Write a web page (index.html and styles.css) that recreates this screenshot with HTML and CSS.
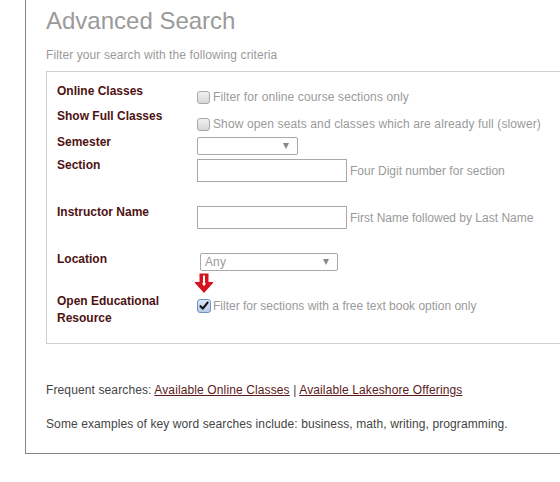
FILE: index.html
```html
<!DOCTYPE html>
<html>
<head>
<meta charset="utf-8">
<link rel="stylesheet" href="styles.css">
</head>
<body>
<div class="panel">
  <h1 class="title">Advanced Search</h1>
  <p class="subtitle">Filter your search with the following criteria</p>
  <div class="criteria">
    <div class="row r1">
      <div class="label">Online Classes</div>
      <div class="control c1">
        <span class="cb"></span><span class="cbtext">Filter for online course sections only</span>
      </div>
    </div>
    <div class="row r2">
      <div class="label">Show Full Classes</div>
      <div class="control c2">
        <span class="cb"></span><span class="cbtext">Show open seats and classes which are already full (slower)</span>
      </div>
    </div>
    <div class="row r3">
      <div class="label">Semester</div>
      <div class="control c3">
        <div class="select sem"><span class="val"></span><span class="caret"></span></div>
      </div>
    </div>
    <div class="row r4">
      <div class="label">Section</div>
      <div class="control c4">
        <div class="input"></div><span class="hint">Four Digit number for section</span>
      </div>
    </div>
    <div class="row r5">
      <div class="label">Instructor Name</div>
      <div class="control c5">
        <div class="input"></div><span class="hint">First Name followed by Last Name</span>
      </div>
    </div>
    <div class="row r6">
      <div class="label">Location</div>
      <div class="control c6">
        <div class="select loc"><span class="val">Any</span><span class="caret"></span></div>
      </div>
    </div>
    <div class="row r7">
      <div class="label two">Open Educational<br>Resource</div>
      <div class="control c7">
        <svg class="pointer" width="20" height="20" viewBox="0 0 20 20">
          <path d="M5.5 0.5 H14.5 V9 H19 Q19.5 9.5 19 10 L10.5 19.5 Q10 20 9.5 19.5 L1 10 Q0.5 9.5 1 9 H5.5 Z" fill="#d5121d"/>
          <path d="M10 2.5 V11" stroke="#fff" stroke-width="2"/>
          <path d="M7.8 10.2 L10 13.2 L12.2 10.2 Z" fill="#fff"/>
        </svg>
        <span class="cb checked">
          <svg width="12" height="12" viewBox="0 0 12 12"><path d="M2.5 6.2 L4.8 8.6 L9.6 2.6" fill="none" stroke="#111" stroke-width="2.1" stroke-linecap="round" stroke-linejoin="round"/></svg>
        </span><span class="cbtext plain">Filter for sections with a free text book option only</span>
      </div>
    </div>
  </div>
  <p class="frequent">Frequent searches: <a href="#">Available Online Classes</a> | <a href="#">Available Lakeshore Offerings</a></p>
  <p class="examples">Some examples of key word searches include: business, math, writing, programming.</p>
</div>
</body>
</html>
```
FILE: styles.css
```css
html, body {
  margin: 0;
  padding: 0;
  background: #fff;
  overflow: hidden;
}
body {
  font-family: "Liberation Sans", Arial, sans-serif;
  font-size: 12px;
  line-height: 15px;
}
.panel {
  box-sizing: border-box;
  margin-left: 25px;
  width: 620px;
  height: 454px;
  border-left: 1px solid #858585;
  border-bottom: 1px solid #858585;
  padding: 7px 0 0 20px;
}
.title {
  margin: 0;
  font-size: 24px;
  line-height: 28px;
  font-weight: normal;
  color: #9a9a9a;
}
.subtitle {
  margin: 13px 0 0;
  color: #9a9a9a;
  letter-spacing: 0.1px;
}
.criteria {
  margin-top: 8px;
  width: 560px;
  border: 1px solid #cfcfcf;
  padding: 12px 0 16px 10px;
}
.row {
  display: flex;
  align-items: flex-start;
}
.r1 { height: 25px; }
.r2 { height: 26px; }
.r3 { height: 23px; }
.r4 { height: 47px; }
.r5 { height: 47px; }
.r6 { height: 41px; }
.r7 { height: 34px; }
.label {
  width: 140px;
  flex: none;
  font-weight: bold;
  color: #4e1212;
}
.label.two {
  line-height: 17px;
}
.control {
  display: flex;
  align-items: center;
  color: #9a9a9a;
  position: relative;
  letter-spacing: 0.12px;
}
.c1 { margin-top: 5px; }
.c2 { margin-top: 7px; }
.c3 { margin-top: 2px; }
.c4 { margin-top: 1px; }
.c5 { margin-top: 1px; }
.c6 { margin-top: 1px; }
.c7 { margin-top: 5px; }
.cb {
  box-sizing: border-box;
  width: 13px;
  height: 13px;
  border: 1px solid #a8a8a8;
  border-radius: 3px;
  background: linear-gradient(#f2f2f2, #d6d6d6);
  flex: none;
  display: flex;
  align-items: center;
  justify-content: center;
}
.cb.checked {
  width: 14px;
  height: 14px;
  border-color: #7593c2;
  background: linear-gradient(#d8e4f4, #b9cbe6);
}
.cbtext {
  margin-left: 3px;
  margin-top: 1px;
}
.cbtext.plain {
  margin-left: 2px;
  letter-spacing: 0;
}
.select {
  box-sizing: border-box;
  height: 18px;
  border: 1px solid #a9a9a9;
  border-radius: 2px;
  display: flex;
  align-items: center;
  justify-content: space-between;
  padding: 0 8px 0 4px;
  background: #fff;
}
.select.sem { width: 101px; }
.select.loc { width: 138px; margin-left: 3px; }
.val { color: #9a9a9a; }
.caret {
  width: 0;
  height: 0;
  border-left: 3.5px solid transparent;
  border-right: 3.5px solid transparent;
  border-top: 6px solid #888;
}
.input {
  box-sizing: border-box;
  width: 150px;
  height: 23px;
  border: 1px solid #a9a9a9;
  background: #fff;
}
.hint {
  margin-left: 3px;
  margin-top: 2px;
  letter-spacing: 0;
}
.pointer {
  position: absolute;
  left: -3px;
  top: -25px;
}
.frequent {
  margin: 39px 0 0;
  color: #444;
  letter-spacing: 0.12px;
}
.examples {
  margin: 19px 0 0;
  color: #444;
  letter-spacing: 0.1px;
}
a {
  color: #5a1a1a;
  text-decoration: underline;
}
```
